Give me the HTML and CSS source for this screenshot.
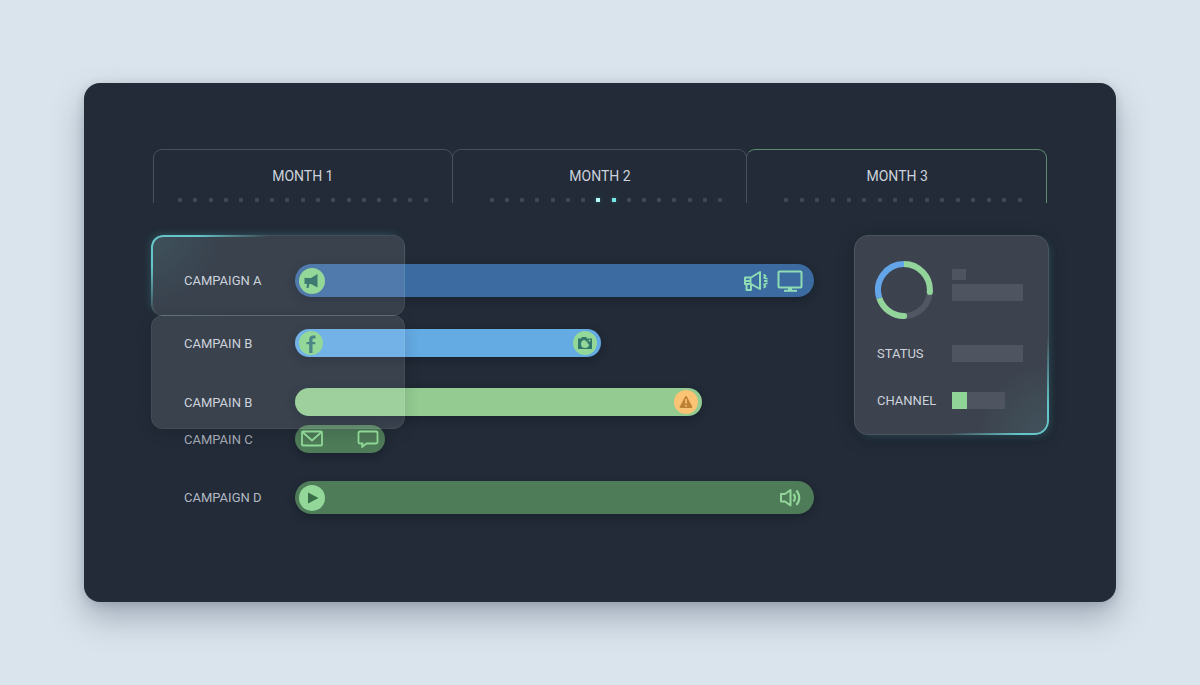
FILE: index.html
```
<!DOCTYPE html>
<html lang="en">
<head>
<meta charset="utf-8">
<meta name="viewport" content="width=device-width, initial-scale=1">
<title>Campaign timeline</title>
<link rel="stylesheet" href="styles.css">
</head>
<body>
<main class="board">
  <header class="months">
    <section class="month month-first">
      <h2 class="month-name">MONTH 1</h2>
      <div class="dots"><i></i><i></i><i></i><i></i><i></i><i></i><i></i><i></i><i></i><i></i><i></i><i></i><i></i><i></i><i></i><i></i><i></i></div>
    </section>
    <section class="month">
      <h2 class="month-name">MONTH 2</h2>
      <div class="dots"><i></i><i></i><i></i><i></i><i></i><i></i><i></i><i class="now"></i><i class="now next"></i><i></i><i></i><i></i><i></i><i></i><i></i><i></i></div>
    </section>
    <section class="month month-active">
      <h2 class="month-name">MONTH 3</h2>
      <div class="dots"><i></i><i></i><i></i><i></i><i></i><i></i><i></i><i></i><i></i><i></i><i></i><i></i><i></i><i></i><i></i><i></i></div>
    </section>
  </header>

  <div class="content">
    <section class="timeline">
      <div class="row row-a">
        <span class="label">CAMPAIGN A</span>
        <div class="track">
          <div class="bar tall blue" style="width:100%">
            <span class="badge large over">
              <svg width="26" height="26" viewBox="0 0 26 26"><path d="M5.500 9.500l1 .5h5.500l6.500-4v13.500l-6.500-3.500h-1.500l-1 4h-2l.5-4h-2.500z" fill="#3f7a72"/></svg>
            </span>
            <span class="icons">
              <svg width="26" height="24" viewBox="0 0 26 24" fill="none" stroke="#8fdcb4" stroke-width="2" stroke-linejoin="round"><path d="M2 8.500h6l9-5.500v17L8 15H2zM7.500 8.500V15M3.500 15v6h4.500v-6M2 12h5"/><path d="M20.500 5.500l2 1.200-1.500 2 3.500 1.300M21 12h3.500M24.500 14l-3.500 1.500 1.500 2-2 1.200" stroke-width="1.800"/></svg>
              <svg width="26" height="24" viewBox="0 0 26 24" fill="none" stroke="#8fdcb4" stroke-width="2" stroke-linejoin="round"><rect x="1.500" y="2.500" width="23" height="16" rx="1"/><path d="M13 18v3" stroke-width="4"/><path d="M7 21.800h13"/></svg>
            </span>
          </div>
        </div>
      </div>
      <div class="row row-b">
        <span class="label">CAMPAIN B</span>
        <div class="track">
          <div class="bar sky" style="width:59%">
            <span class="badge over">
              <svg width="24" height="24" viewBox="0 0 24 24"><path d="M16.500 4.500v3h-1.700c-1 0-1.300.5-1.300 1.400v2.100h2.800v2.300h-2.800V22h-3.300v-8.700H7.500V11h2.700V8.500C10.200 6 11.700 4.500 14 4.500z" fill="#4c8586"/></svg>
            </span>
            <span class="badge">
              <svg width="24" height="24" viewBox="0 0 24 24"><path fill-rule="evenodd" d="M5 7.500h3.500V6h5v1.500H19V18H5zM12 9a4 4 0 1 0 4 4l-2-1 1-1.500-2-.1z" fill="#32776a"/><circle cx="16.500" cy="9.500" r="1" fill="#93d899"/></svg>
            </span>
          </div>
        </div>
      </div>
      <div class="row row-b2">
        <span class="label">CAMPAIN B</span>
        <div class="track">
          <div class="bar mint" style="width:78.4%">
            <span></span>
            <span class="badge warn">
              <svg width="24" height="24" viewBox="0 0 24 24"><path d="M12 7l5.300 10H6.700z" fill="#bf8136" stroke="#bf8136" stroke-width="2" stroke-linejoin="round"/><path d="M12 9v4.500M12 15v1.600" stroke="#fbc374" stroke-width="1.600"/></svg>
            </span>
          </div>
        </div>
      </div>
      <div class="row row-c">
        <span class="label dim">CAMPAIN C</span>
        <div class="track">
          <div class="bar green short" style="width:17.4%">
            <svg class="over" width="22" height="20" viewBox="0 0 22 20" fill="none" stroke="#8ed796" stroke-width="1.800" stroke-linejoin="round"><rect x="1" y="2.500" width="20" height="14" rx="1"/><path d="M2 3.500l9 8 9-8"/></svg>
            <svg class="over" width="22" height="20" viewBox="0 0 22 20" fill="none" stroke="#8ed796" stroke-width="1.800" stroke-linejoin="round"><path d="M3 2.500h16q1.500 0 1.500 1.500v9q0 1.500-1.500 1.500H9.500L5 18l.5-3.500H3Q1.500 14.500 1.500 13V4Q1.500 2.500 3 2.500z"/></svg>
          </div>
        </div>
      </div>
      <div class="row row-d">
        <span class="label soft">CAMPAIGN D</span>
        <div class="track">
          <div class="bar tall green" style="width:100%">
            <span class="badge large">
              <svg width="26" height="26" viewBox="0 0 26 26"><path d="M9 7.500l10.500 5.500L9 18.500z" fill="#386f4a"/></svg>
            </span>
            <span class="icons">
              <svg width="24" height="24" viewBox="0 0 24 24" fill="none" stroke="#92d69a" stroke-width="2" stroke-linejoin="round"><path d="M2 8h4l5.500-4v15.500L6 15.500H2z"/><path d="M14.500 8q3 3.500 0 7.500M17.500 4.500q5.500 7.500 0 14.500" stroke-width="2.200"/></svg>
            </span>
          </div>
        </div>
      </div>
      <div class="glass-stack">
        <div class="glass glass-top"></div>
        <div class="glass glass-bottom"></div>
      </div>
    </section>

    <aside class="summary">
      <svg class="donut" width="58" height="58" viewBox="0 0 58 58" fill="none" stroke-width="6">
        <circle cx="29" cy="29" r="26" stroke="#515864"/>
        <path d="M29 55A26 26 0 0 1 4.300 37" stroke="#93d49b"/>
        <path d="M29 55h.1" stroke="#93d49b" stroke-linecap="round"/>
        <path d="M4.300 37A26 26 0 0 1 29 3" stroke="#62a5e9"/>
        <path d="M29 3A26 26 0 0 1 54.800 31" stroke="#93d49b"/>
        <path d="M54.800 31v.1" stroke="#93d49b" stroke-linecap="round"/>
      </svg>
      <div class="lines">
        <span class="block tiny"></span>
        <span class="block"></span>
      </div>
      <span class="key">STATUS</span>
      <span class="block"></span>
      <span class="key last">CHANNEL</span>
      <span class="block meter last"><span class="fill" style="width:28%"></span></span>
    </aside>
  </div>
</main>
</body>
</html>
```
FILE: styles.css
```
* {
  box-sizing: border-box;
}

body {
  margin: 0;
  min-height: 100vh;
  padding: 83px 84px;
  display: flex;
  background: #dae4ec;
  color: #cdd2dc;
  font: 13px/17px Roboto, "Liberation Sans", sans-serif;
}

.board {
  flex: 1;
  padding: 66px 67px;
  border-radius: 16px;
  background: #222b37;
  box-shadow: 0 16px 32px rgba(62, 76, 96, 0.36), 0 2px 10px rgba(62, 76, 96, 0.2);
}

.months {
  display: grid;
  grid-template-columns: 300fr 295fr 300fr;
  margin: 0 2px;
}

.month {
  height: 54px;
  margin-left: -1px;
  padding: 17px 24px 0 37px;
  border: 1px solid #46515d;
  border-bottom: 0;
  border-radius: 9px 9px 0 0;
}

.month-first {
  margin-left: 0;
  padding-left: 24px;
}

.month-active {
  border-color: #5c8c70;
  border-left-color: #46515d;
}

.month-name {
  margin: 0 0 13px;
  font-size: 14px;
  line-height: 18px;
  font-weight: 400;
  text-align: center;
}

.month:not(.month-first) .month-name {
  margin-left: -12px;
}

.dots {
  display: flex;
  justify-content: space-between;
}

.dots i {
  width: 4px;
  height: 4px;
  border-radius: 1px;
  background: #3e4854;
}

.dots .now {
  border-radius: 0;
  background: #b4fafa;
  box-shadow: 0 0 4px rgba(120, 235, 240, 0.3);
}

.dots .next {
  background: #78e6e6;
}

.content {
  display: grid;
  grid-template-columns: 1fr 195px;
  gap: 40px;
  align-items: start;
  margin-top: 32px;
}

.timeline {
  position: relative;
  padding-top: 29px;
}

.row {
  display: grid;
  grid-template-columns: 111px 1fr;
  align-items: center;
  margin-left: 33px;
}

.row-b {
  margin-top: 32px;
}

.row-b2 {
  margin-top: 31px;
}

.row-c {
  margin-top: 9px;
}

.row-d {
  margin-top: 28px;
}

.label {
  position: relative;
  z-index: 2;
}

.soft {
  color: #b3b9c3;
}

.dim {
  color: #a2a8b2;
}

.bar {
  display: flex;
  align-items: center;
  justify-content: space-between;
  height: 28px;
  padding: 0 4px;
  border-radius: 17px;
  box-shadow: 0 3px 8px rgba(15, 20, 32, 0.4);
}

.tall {
  height: 33px;
}

.short {
  padding: 0 6px;
}

.blue {
  background: #3b6ba1;
}

.sky {
  background: #64aae3;
}

.mint {
  background: #93cb91;
}

.green {
  background: #4e7b58;
}

.badge {
  width: 24px;
  height: 24px;
  border-radius: 50%;
  background: #93d899;
}

.badge svg,
.icons svg {
  display: block;
}

.large {
  width: 26px;
  height: 26px;
}

.over {
  position: relative;
  z-index: 2;
}

.warn {
  background: #fbc374;
}

.icons {
  display: flex;
  gap: 8px;
  padding-right: 7px;
}

/* Translucent cards lying over the start of the timeline */
.glass-stack {
  position: absolute;
  z-index: 1;
  top: 0;
  left: 0;
  width: 254px;
}

.glass {
  position: relative;
  border: 1px solid rgba(255, 255, 255, 0.06);
  border-radius: 12px;
  background: rgba(240, 243, 255, 0.115);
  box-shadow: 0 4px 16px rgba(10, 15, 25, 0.14);
}

.glass-top {
  height: 81px;
  background: radial-gradient(circle at 0 0, rgba(110, 220, 220, 0.1), transparent 70px), rgba(240, 243, 255, 0.115);
  box-shadow: -3px -3px 8px -3px rgba(90, 210, 215, 0.25);
}

.glass-bottom {
  height: 114px;
  margin-top: -1px;
}

.glass-top::before,
.summary::before {
  content: "";
  position: absolute;
  inset: -1px;
  padding: 2px;
  border-radius: 12px;
  background: radial-gradient(ellipse 118px 79px at 0 0, #65c5c8 40%, transparent);
  mask: linear-gradient(#000 0 0) content-box exclude, linear-gradient(#000 0 0);
}

.summary {
  position: relative;
  display: grid;
  grid-template-columns: 77px 1fr;
  row-gap: 26px;
  align-items: center;
  padding: 25px 25px 25px 20px;
  border: 1px solid #4c545f;
  border-radius: 14px;
  background: radial-gradient(circle at 100% 100%, rgba(110, 220, 220, 0.1), transparent 70px), #3c434e;
  box-shadow: 3px 3px 8px -3px rgba(90, 210, 215, 0.25), 0 4px 18px rgba(10, 15, 25, 0.22);
}

.summary::before {
  border-radius: 14px;
  background: radial-gradient(circle 100px at 100% 100%, #65c5c8 30%, transparent);
}

.donut {
  display: block;
}

.lines {
  display: grid;
  gap: 4px;
  align-self: start;
  padding-top: 8px;
}

.block {
  display: block;
  height: 17px;
  background: #4e5560;
}

.tiny {
  width: 14px;
  height: 11px;
}

.key {
  padding-left: 2px;
}

.last {
  margin-top: 4px;
}

.meter {
  width: 53px;
}

.fill {
  display: block;
  height: 17px;
  background: #90d498;
}
```
